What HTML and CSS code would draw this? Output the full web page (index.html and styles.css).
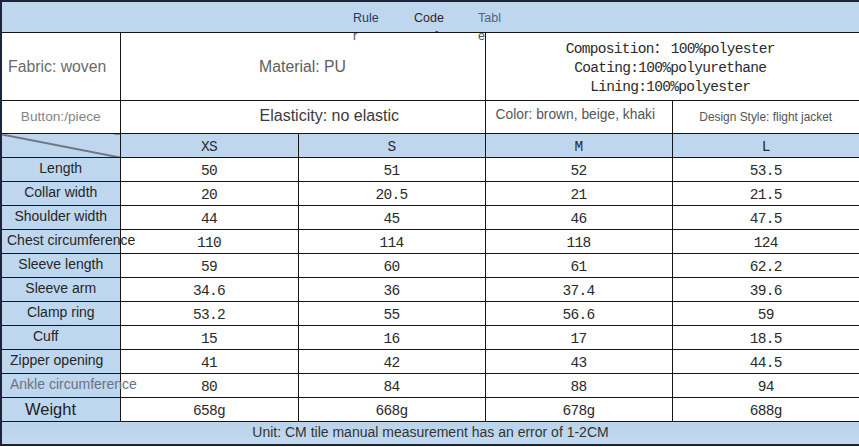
FILE: index.html
```html
<!DOCTYPE html>
<html>
<head>
<meta charset="utf-8">
<link rel="stylesheet" href="styles.css">
</head>
<body>
<table class="sheet">
  <colgroup>
    <col class="c0"><col class="c1"><col class="c2"><col class="c3"><col class="c4">
  </colgroup>
  <tr class="r-title">
    <td colspan="5" class="title">
      <div class="title-words">
        <span class="tw tw-rule">Rule<span class="tw-sub">r</span></span>
        <span class="tw tw-code">Code<span class="tw-dash">-</span></span>
        <span class="tw tw-tabl">Tabl<span class="tw-sub">e</span></span>
      </div>
    </td>
  </tr>
  <tr class="r-info1">
    <td class="fabric">Fabric: woven</td>
    <td colspan="2" class="material">Material: PU</td>
    <td colspan="2" class="comp mono">Composition<span class="fw">：</span>100%polyester<br>Coating:100%polyurethane<br>Lining:100%polyester</td>
  </tr>
  <tr class="r-info2">
    <td class="button">Button:/piece</td>
    <td colspan="2" class="elastic">Elasticity: no elastic</td>
    <td class="color">Color: brown, beige, khaki</td>
    <td class="design">Design Style: flight jacket</td>
  </tr>
  <tr class="r-size">
    <td class="corner"></td>
    <td class="size mono">XS</td>
    <td class="size mono">S</td>
    <td class="size mono">M</td>
    <td class="size mono">L</td>
  </tr>
  <tr class="r-data"><td class="lbl">Length</td><td class="num mono">50</td><td class="num mono">51</td><td class="num mono">52</td><td class="num mono">53.5</td></tr>
  <tr class="r-data"><td class="lbl">Collar width</td><td class="num mono">20</td><td class="num mono">20.5</td><td class="num mono">21</td><td class="num mono">21.5</td></tr>
  <tr class="r-data"><td class="lbl">Shoulder width</td><td class="num mono">44</td><td class="num mono">45</td><td class="num mono">46</td><td class="num mono">47.5</td></tr>
  <tr class="r-data"><td class="lbl lbl-left lbl-chest">Chest circumference</td><td class="num mono">110</td><td class="num mono">114</td><td class="num mono">118</td><td class="num mono">124</td></tr>
  <tr class="r-data"><td class="lbl">Sleeve length</td><td class="num mono">59</td><td class="num mono">60</td><td class="num mono">61</td><td class="num mono">62.2</td></tr>
  <tr class="r-data"><td class="lbl">Sleeve arm</td><td class="num mono">34.6</td><td class="num mono">36</td><td class="num mono">37.4</td><td class="num mono">39.6</td></tr>
  <tr class="r-data"><td class="lbl">Clamp ring<span class="ghost">. .. .</span></td><td class="num mono">53.2</td><td class="num mono">55</td><td class="num mono">56.6</td><td class="num mono">59</td></tr>
  <tr class="r-data"><td class="lbl lbl-left lbl-cuff">Cuff<span class="ghost">. . .</span></td><td class="num mono">15</td><td class="num mono">16</td><td class="num mono">17</td><td class="num mono">18.5</td></tr>
  <tr class="r-data"><td class="lbl lbl-left lbl-zip">Zipper opening</td><td class="num mono">41</td><td class="num mono">42</td><td class="num mono">43</td><td class="num mono">44.5</td></tr>
  <tr class="r-data"><td class="lbl lbl-left lbl-ankle">Ankle circumference</td><td class="num mono">80</td><td class="num mono">84</td><td class="num mono">88</td><td class="num mono">94</td></tr>
  <tr class="r-data"><td class="lbl lbl-left lbl-weight">Weight</td><td class="num mono">658g</td><td class="num mono">668g</td><td class="num mono">678g</td><td class="num mono">688g</td></tr>
  <tr class="r-foot">
    <td colspan="5" class="foot">Unit: CM tile manual measurement has an error of 1-2CM</td>
  </tr>
</table>
</body>
</html>
```

FILE: styles.css
```css
html, body {
  margin: 0;
  padding: 0;
  background: #ffffff;
}

body {
  font-family: "Liberation Sans", Arial, sans-serif;
  color: #222;
}

.sheet {
  border-collapse: collapse;
  table-layout: fixed;
  width: 859px;
  border: 2px solid #1b2438;
}

.c0 { width: 119px; }
.c1 { width: 178px; }
.c2 { width: 187px; }
.c3 { width: 187px; }
.c4 { width: 188px; }

.sheet td {
  border: 1px solid #161616;
  padding: 0;
  text-align: center;
  vertical-align: middle;
  white-space: nowrap;
  overflow: visible;
}

.mono {
  font-family: "Liberation Mono", "Courier New", monospace;
  font-size: 14.5px;
  letter-spacing: -0.7px;
  color: #2a2a2a;
}

/* title row */
.r-title { height: 31px; }
.title {
  background: #bfd7ee;
  vertical-align: top !important;
  text-align: left !important;
}
.title-words {
  display: flex;
  height: 23px;
  padding-left: 351px;
  padding-top: 7px;
}
.tw {
  display: flex;
  flex-direction: column;
  font-size: 12.5px;
  line-height: 19px;
}
.tw-rule { width: 61px; color: #2c3a58; }
.tw-code { width: 64px; color: #2a2a2a; }
.tw-tabl { color: #56627c; }
.tw-sub { color: #555; margin-top: -1px; }
.tw-dash {
  padding-left: 21px;
  color: #333;
  font-size: 10px;
  line-height: 6px;
}

/* info rows */
.r-info1 { height: 68px; }
.fabric {
  text-align: left !important;
  padding-left: 6px !important;
  font-size: 15.8px;
  color: #6a6a6a;
}
.material {
  font-size: 15.8px;
  color: #5e5e5e;
}
.comp {
  font-size: 14.5px;
  line-height: 19px;
  padding-left: 0 !important;
  padding-right: 4px !important;
  padding-top: 0 !important;
}
.fw {
  display: inline-block;
  width: 17px;
  font-family: "Noto Sans CJK SC", sans-serif;
  letter-spacing: 0;
  text-align: left;
}

.r-info2 { height: 33px; }
.button {
  font-size: 13.7px;
  color: #858585;
  padding-bottom: 1px !important;
}
.elastic {
  text-align: left !important;
  padding-left: 139px !important;
  font-size: 16px;
  color: #3a3a3a;
  padding-bottom: 3px !important;
}
.color {
  text-align: left !important;
  padding-left: 10px !important;
  font-size: 13.8px;
  color: #555;
  padding-bottom: 6px !important;
}
.design {
  font-size: 11.9px;
  color: #555;
  padding-bottom: 1px !important;
}

/* size header */
.r-size { height: 24px; }
.corner {
  background:
    linear-gradient(to top right, transparent calc(50% - 1px), #1a1a1a 50%, transparent calc(50% + 1px)),
    #bfd7ee;
}
.size {
  background: #bfd7ee;
  padding-top: 2px !important;
}

/* data rows */
.r-data { height: 24px; }
.lbl {
  background: #bfd7ee;
  font-size: 14px;
  color: #262626;
  padding-bottom: 4px !important;
  line-height: 16px;
}
.lbl-left { text-align: left !important; }
.lbl-chest { padding-left: 5px !important; }
.lbl-cuff { padding-left: 31px !important; }
.lbl-zip { padding-left: 8px !important; }
.lbl-ankle { padding-left: 8px !important; color: #6b7284; }
.lbl-weight {
  padding-left: 23px !important;
  font-size: 16.5px;
  color: #222;
  padding-bottom: 2px !important;
}
.ghost {
  display: block;
  height: 0;
  font-size: 6px;
  line-height: 7px;
  color: #888;
  letter-spacing: 1px;
}
.num {
  padding-top: 2px !important;
}

/* footer */
.r-foot { height: 23px; }
.foot {
  background: linear-gradient(to bottom, #bad3ea, #c2d9ef);
  font-size: 14px;
  color: #333;
  padding-bottom: 1px !important;
}
```
